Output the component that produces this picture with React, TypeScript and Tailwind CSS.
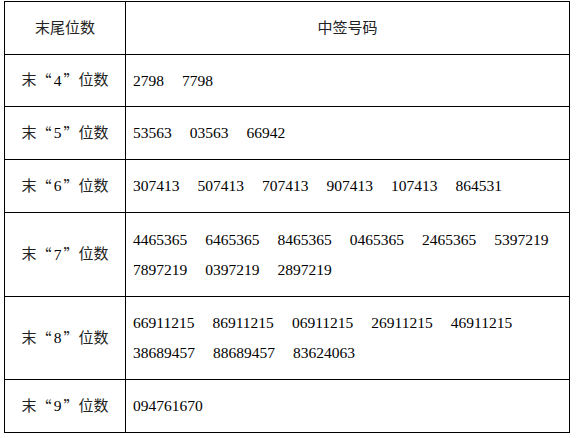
import React from 'react'

const rows: { digit: string; h: string; nums: string[] }[] = [
  { digit: '4', h: 'h-[52px]', nums: ['2798', '7798'] },
  { digit: '5', h: 'h-[53px]', nums: ['53563', '03563', '66942'] },
  { digit: '6', h: 'h-[53px]', nums: ['307413', '507413', '707413', '907413', '107413', '864531'] },
  {
    digit: '7',
    h: 'h-[84px]',
    nums: ['4465365', '6465365', '8465365', '0465365', '2465365', '5397219', '7897219', '0397219', '2897219'],
  },
  {
    digit: '8',
    h: 'h-[83px]',
    nums: ['66911215', '86911215', '06911215', '26911215', '46911215', '38689457', '88689457', '83624063'],
  },
  { digit: '9', h: 'h-[53px]', nums: ['094761670'] },
]

// 末“N”位数 — quotes come from the CJK font so they take full-width boxes
function Label({ digit }: { digit: string }) {
  return (
    <span className="inline-flex items-center text-[#222] whitespace-nowrap">
      <span>末</span>
      <span className="font-['Noto_Sans_CJK_SC']">“</span>
      <span className="mx-[2px] font-['Liberation_Serif'] text-[15.5px] text-black">{digit}</span>
      <span className="font-['Noto_Sans_CJK_SC']">”</span>
      <span>位数</span>
    </span>
  )
}

export default function App() {
  return (
    <div className="w-[579px] h-[438px] bg-white pt-[1px] pl-[4px] text-[15px] text-[#111] font-['Liberation_Serif','Noto_Sans_CJK_SC',serif]">
      <table className="border-collapse w-[566px] table-fixed">
        <colgroup>
          <col className="w-[121px]" />
          <col />
        </colgroup>
        <thead>
          <tr className="h-[53px]">
            <th className="border border-black font-normal text-center align-middle text-[#222]">末尾位数</th>
            <th className="border border-black font-normal text-center align-middle text-[#222]">中签号码</th>
          </tr>
        </thead>
        <tbody>
          {rows.map(r => (
            <tr key={r.digit} className={r.h}>
              <td className="border border-black text-center align-middle">
                <Label digit={r.digit} />
              </td>
              <td className="border border-black align-middle pl-[7px] pr-[4px]">
                <div className="flex flex-wrap gap-x-[18px] leading-[30px] text-[15.5px] text-black">
                  {r.nums.map(n => (
                    <span key={n}>{n}</span>
                  ))}
                </div>
              </td>
            </tr>
          ))}
        </tbody>
      </table>
    </div>
  )
}
